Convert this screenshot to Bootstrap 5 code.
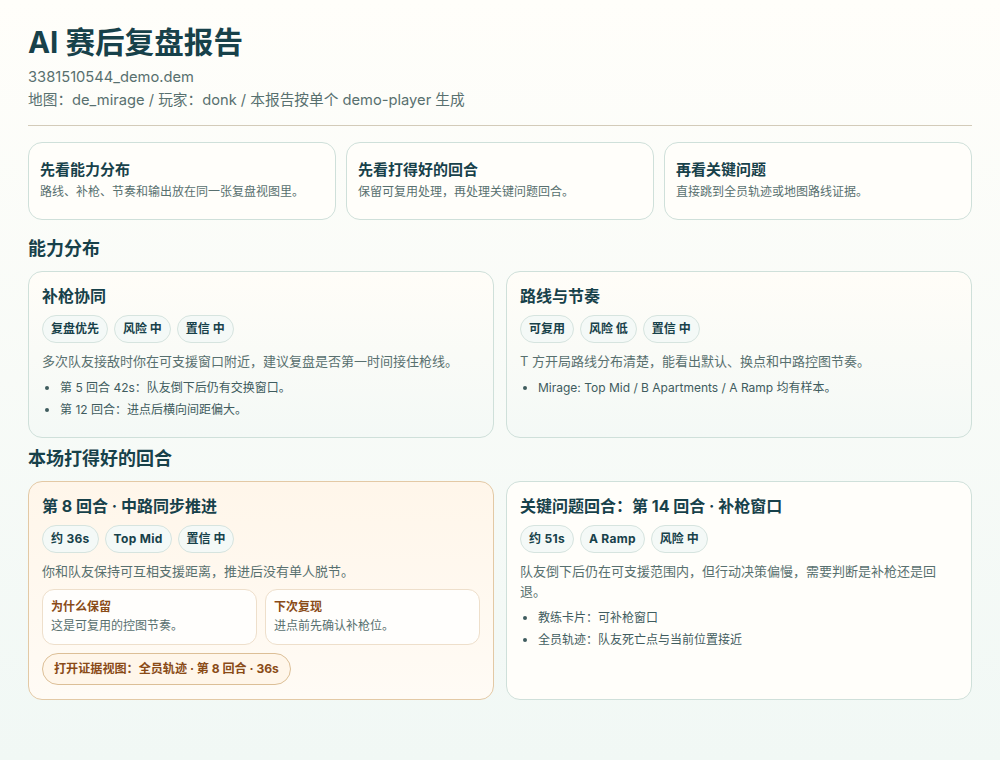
<!DOCTYPE html>
<html lang="zh-CN">
<head>
    <meta charset="UTF-8">
    <meta name="viewport" content="width=device-width, initial-scale=1.0">
    <title>AI 赛后复盘报告</title>
    <link href="https://cdn.jsdelivr.net/npm/bootstrap@5.3.0/dist/css/bootstrap.min.css" rel="stylesheet">
    <style>
        html, body { min-height: 760px; }
        body {
            font-family: Inter, "Noto Sans CJK SC", sans-serif;
            background: linear-gradient(180deg, #fffefa 0%, #f1f8f5 100%);
            color: #17414a;
        }
        .report-wrap { padding: 24px 28px 0; }
        .report-title { font-size: 29.6px; font-weight: 700; line-height: 36px; margin: 0 0 6px; color: #17414a; }
        .report-meta { font-size: 14.7px; line-height: 23px; color: #58706f; margin: 0; }
        .report-rule { margin: 13px 0 16px; border: 0; border-top: 1px solid #d3cbb9; opacity: 1; }
        .guide-grid { display: grid; grid-template-columns: repeat(3, 1fr); gap: 10px; }
        .guide-item { height: 78px; padding: 17px 11px 0; border: 1px solid #cfe0da; border-radius: 14px; background: #fffefa; }
        .guide-item h3 { font-size: 15px; font-weight: 700; line-height: 20px; margin: 0 0 3px; color: #17414a; }
        .guide-item p { font-size: 12px; line-height: 18px; margin: 0; color: #58706f; }
        .section-title { font-size: 18px; font-weight: 700; line-height: 24px; margin: 17px 0 10px; color: #17414a; }
        .section-title.tight { margin: 9px 0 10px; }
        .report-grid { display: grid; grid-template-columns: 1fr 1fr; gap: 12px; }
        .report-card { border: 1px solid #cfe0da; border-radius: 14px; padding: 13px; background: linear-gradient(180deg, #fffdf8 0%, #f4f9f6 100%); }
        .report-card.h-a { height: 167px; }
        .report-card.h-b { height: 219px; background: #fffefa; }
        .report-card.warm { border-color: #e3c9a5; background: linear-gradient(180deg, #fff6ea 0%, #fffbf5 100%); }
        .report-card h4 { font-size: 16px; font-weight: 700; line-height: 22px; margin: 0 0 8px; color: #17414a; }
        .tag-row { display: flex; gap: 6px; margin-bottom: 8px; }
        .tag-pill { height: 28px; line-height: 26px; padding: 0 8px; border: 1px solid #d6e4df; border-radius: 14px; background: #f4f9f7; font-size: 12px; font-weight: 700; color: #17414a; }
        .tag-pill.latin-pill { letter-spacing: .3px; }
        .report-card p.body-text { font-size: 13px; line-height: 20px; margin: 0 0 8px; color: #58706f; }
        .report-card ul { font-size: 12px; line-height: 18px; color: #3f5c5e; margin: 2px 0 0; padding-left: 18px; }
        .report-card li { margin-bottom: 4px; }
        .note-grid { display: grid; grid-template-columns: 1fr 1fr; gap: 8px; margin-bottom: 8px; }
        .note-box { height: 56px; padding: 8px 8px; border: 1px solid #eedfcb; border-radius: 12px; background: #fffefc; }
        .note-box b { display: block; font-size: 12px; line-height: 18px; font-weight: 700; color: #8a4b17; }
        .note-box span { display: block; font-size: 12px; line-height: 20px; color: #58706f; }
        .proof-btn { display: inline-block; height: 32px; line-height: 30px; padding: 0 11px; border: 1px solid #dcbf97; border-radius: 16px; background: #fff6ea; font-size: 12.1px; font-weight: 700; color: #8a4b17; }
    </style>
</head>
<body>
    <div class="report-wrap">
        <h1 class="report-title">AI 赛后复盘报告</h1>
        <p class="report-meta">3381510544_demo.dem</p>
        <p class="report-meta">地图：de_mirage / 玩家：donk / 本报告按单个 demo-player 生成</p>
        <hr class="report-rule">

        <div class="guide-grid">
            <div class="guide-item">
                <h3>先看能力分布</h3>
                <p>路线、补枪、节奏和输出放在同一张复盘视图里。</p>
            </div>
            <div class="guide-item">
                <h3>先看打得好的回合</h3>
                <p>保留可复用处理，再处理关键问题回合。</p>
            </div>
            <div class="guide-item">
                <h3>再看关键问题</h3>
                <p>直接跳到全员轨迹或地图路线证据。</p>
            </div>
        </div>

        <h2 class="section-title">能力分布</h2>
        <div class="report-grid">
            <div class="report-card h-a">
                <h4>补枪协同</h4>
                <div class="tag-row">
                    <span class="tag-pill">复盘优先</span>
                    <span class="tag-pill">风险 中</span>
                    <span class="tag-pill">置信 中</span>
                </div>
                <p class="body-text">多次队友接敌时你在可支援窗口附近，建议复盘是否第一时间接住枪线。</p>
                <ul>
                    <li>第 5 回合 42s：队友倒下后仍有交换窗口。</li>
                    <li>第 12 回合：进点后横向间距偏大。</li>
                </ul>
            </div>
            <div class="report-card h-a">
                <h4>路线与节奏</h4>
                <div class="tag-row">
                    <span class="tag-pill">可复用</span>
                    <span class="tag-pill">风险 低</span>
                    <span class="tag-pill">置信 中</span>
                </div>
                <p class="body-text">T 方开局路线分布清楚，能看出默认、换点和中路控图节奏。</p>
                <ul>
                    <li>Mirage: Top Mid / B Apartments / A Ramp 均有样本。</li>
                </ul>
            </div>
        </div>

        <h2 class="section-title tight">本场打得好的回合</h2>
        <div class="report-grid">
            <div class="report-card h-b warm">
                <h4>第 8 回合 · 中路同步推进</h4>
                <div class="tag-row">
                    <span class="tag-pill latin-pill">约 36s</span>
                    <span class="tag-pill latin-pill">Top Mid</span>
                    <span class="tag-pill">置信 中</span>
                </div>
                <p class="body-text">你和队友保持可互相支援距离，推进后没有单人脱节。</p>
                <div class="note-grid">
                    <div class="note-box"><b>为什么保留</b><span>这是可复用的控图节奏。</span></div>
                    <div class="note-box"><b>下次复现</b><span>进点前先确认补枪位。</span></div>
                </div>
                <a class="proof-btn text-decoration-none" href="#">打开证据视图：全员轨迹 · 第 8 回合 · 36s</a>
            </div>
            <div class="report-card h-b">
                <h4>关键问题回合：第 14 回合 · 补枪窗口</h4>
                <div class="tag-row">
                    <span class="tag-pill latin-pill">约 51s</span>
                    <span class="tag-pill latin-pill">A Ramp</span>
                    <span class="tag-pill">风险 中</span>
                </div>
                <p class="body-text">队友倒下后仍在可支援范围内，但行动决策偏慢，需要判断是补枪还是回退。</p>
                <ul>
                    <li>教练卡片：可补枪窗口</li>
                    <li>全员轨迹：队友死亡点与当前位置接近</li>
                </ul>
            </div>
        </div>
    </div>
    <script src="https://cdn.jsdelivr.net/npm/bootstrap@5.3.0/dist/js/bootstrap.bundle.min.js"></script>
</body>
</html>
